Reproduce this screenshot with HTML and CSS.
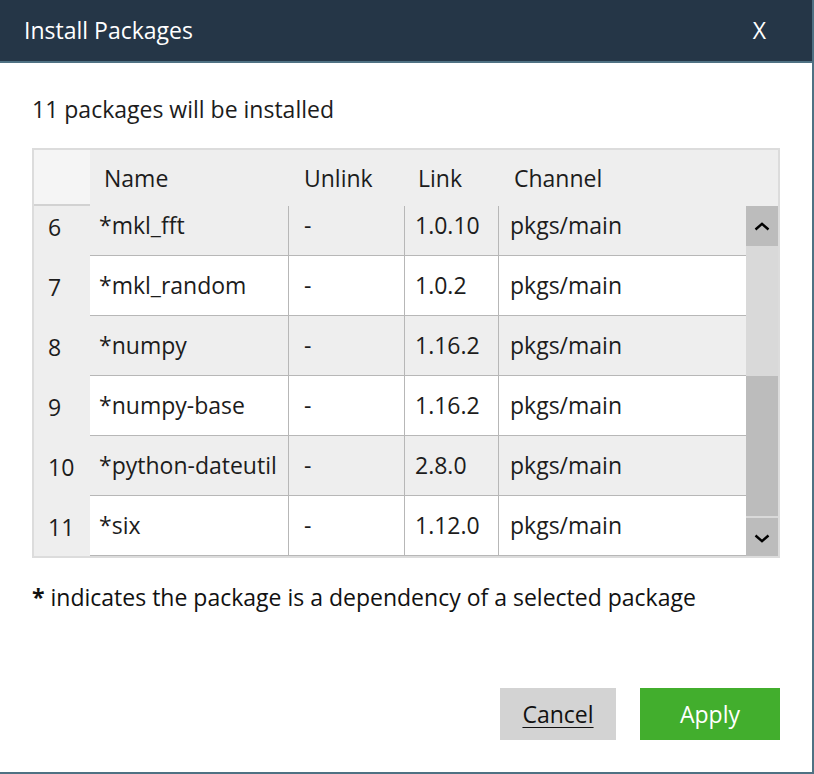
FILE: index.html
```html
<!DOCTYPE html>
<html lang="en">
<head>
<meta charset="utf-8">
<title>Install Packages</title>
<link rel="stylesheet" href="styles.css">
</head>
<body>
<div class="dialog">
  <div class="titlebar">
    <span class="title">Install Packages</span>
    <span class="close">X</span>
  </div>
  <div class="content">
    <p class="summary">11 packages will be installed</p>
    <div class="table">
      <div class="thead">
        <div class="corner"></div>
        <div class="th c-name">Name</div>
        <div class="th c-unlink">Unlink</div>
        <div class="th c-link">Link</div>
        <div class="th c-channel">Channel</div>
        <div class="th c-scroll"></div>
      </div>
      <div class="tbody">
        <div class="viewport">
          <div class="rows">
            <div class="row alt"><div class="num">6</div><div class="td c-name">*mkl_fft</div><div class="td c-unlink">-</div><div class="td c-link">1.0.10</div><div class="td c-channel">pkgs/main</div></div>
            <div class="row"><div class="num">7</div><div class="td c-name">*mkl_random</div><div class="td c-unlink">-</div><div class="td c-link">1.0.2</div><div class="td c-channel">pkgs/main</div></div>
            <div class="row alt"><div class="num">8</div><div class="td c-name">*numpy</div><div class="td c-unlink">-</div><div class="td c-link">1.16.2</div><div class="td c-channel">pkgs/main</div></div>
            <div class="row"><div class="num">9</div><div class="td c-name">*numpy-base</div><div class="td c-unlink">-</div><div class="td c-link">1.16.2</div><div class="td c-channel">pkgs/main</div></div>
            <div class="row alt"><div class="num">10</div><div class="td c-name">*python-dateutil</div><div class="td c-unlink">-</div><div class="td c-link">2.8.0</div><div class="td c-channel">pkgs/main</div></div>
            <div class="row"><div class="num">11</div><div class="td c-name">*six</div><div class="td c-unlink">-</div><div class="td c-link">1.12.0</div><div class="td c-channel">pkgs/main</div></div>
          </div>
        </div>
        <div class="scrollbar">
          <div class="sb-btn sb-up">
            <svg width="16" height="9" viewBox="0 0 16 9"><polyline points="1.5,7.5 8,1.8 14.5,7.5" fill="none" stroke="#000" stroke-width="2.4"/></svg>
          </div>
          <div class="sb-track"></div>
          <div class="sb-thumb"></div>
          <div class="sb-gap"></div>
          <div class="sb-btn sb-down">
            <svg width="16" height="9" viewBox="0 0 16 9"><polyline points="1.5,1.5 8,7.2 14.5,1.5" fill="none" stroke="#000" stroke-width="2.4"/></svg>
          </div>
        </div>
      </div>
    </div>
    <p class="note"><b>*</b> indicates the package is a dependency of a selected package</p>
    <div class="actions">
      <button class="btn btn-cancel">Cancel</button>
      <button class="btn btn-apply">Apply</button>
    </div>
  </div>
</div>
</body>
</html>
```
FILE: styles.css
```css
* { box-sizing: border-box; }
html, body { margin: 0; padding: 0; background: #fff; }
body {
  font-family: "Open Sans", "Noto Sans", sans-serif;
  font-size: 23px;
  color: #1c1c1c;
}
.dialog {
  width: 814px;
  height: 774px;
  border-right: 2px solid #4f7183;
  border-bottom: 2px solid #4f7183;
  display: flex;
  flex-direction: column;
  background: #fff;
}
.titlebar {
  height: 63px;
  background: #253647;
  border-bottom: 2px solid #4f7183;
  display: flex;
  align-items: center;
  justify-content: space-between;
  padding: 0 46px 2px 24px;
  color: #fff;
  flex: none;
}
.title { font-size: 23px; line-height: 30px; }
.close { font-size: 23px; line-height: 30px; }
.content {
  padding: 0 32px;
  display: flex;
  flex-direction: column;
}
.summary {
  margin: 0;
  height: 85px;
  padding-top: 31px;
  line-height: 30px;
}
.table {
  width: 748px;
  height: 410px;
  border: 2px solid #dcdcdc;
  display: flex;
  flex-direction: column;
}
.thead {
  height: 56px;
  display: grid;
  grid-template-columns: 56px 198px 116px 94px 248px 32px;
  background: #eeeeee;
  flex: none;
}
.corner {
  background: #f5f5f5;
  border-bottom: 2px solid #d2d2d2;
}
.th {
  display: flex;
  align-items: center;
  line-height: 30px;
  padding-top: 0;
}
.th.c-name { padding-left: 14px; }
.th.c-unlink { padding-left: 16px; }
.th.c-link { padding-left: 14px; }
.th.c-channel { padding-left: 16px; }
.tbody {
  height: 350px;
  display: flex;
}
.viewport {
  width: 712px;
  height: 350px;
  overflow: hidden;
  background: #eeeeee;
}
.rows { margin-top: -10px; }
.row {
  display: grid;
  grid-template-columns: 56px 198px 116px 94px 248px;
  height: 60px;
  background: #fff;
}
.row.alt { background: #eeeeee; }
.num {
  background: #eeeeee;
  display: flex;
  align-items: center;
  padding-left: 14px;
  padding-top: 2px;
  line-height: 30px;
}
.td {
  display: flex;
  align-items: center;
  border-bottom: 1px solid #b7b7b7;
  line-height: 30px;
  padding-bottom: 2px;
  white-space: nowrap;
}
.td.c-name { padding-left: 9px; }
.td.c-unlink { padding-left: 15px; border-left: 1px solid #b7b7b7; }
.td.c-link { padding-left: 10px; border-left: 1px solid #b7b7b7; }
.td.c-channel { padding-left: 11px; border-left: 1px solid #b7b7b7; }
.scrollbar {
  width: 32px;
  height: 350px;
  background: #d9d9d9;
  display: flex;
  flex-direction: column;
}
.sb-btn {
  background: #bcbcbc;
  display: flex;
  align-items: center;
  justify-content: center;
  flex: none;
}
.sb-up { height: 40px; }
.sb-track { height: 130px; flex: none; }
.sb-thumb { height: 140px; background: #bcbcbc; flex: none; }
.sb-gap { height: 2px; flex: none; }
.sb-down { height: 38px; padding-top: 2px; }
.sb-btn svg { display: block; }
.note {
  margin: 24px 0 0;
  line-height: 30px;
  color: #111;
}
.note b { font-weight: 700; }
.actions {
  margin-top: 76px;
  display: flex;
  justify-content: flex-end;
  gap: 24px;
}
.btn {
  font-family: inherit;
  font-size: 23px;
  height: 52px;
  border: none;
  padding: 0;
  line-height: 30px;
}
.btn-cancel {
  width: 116px;
  background: #d3d3d3;
  color: #111;
  text-decoration: underline;
  text-underline-offset: 4px;
  text-decoration-thickness: 1px;
}
.btn-apply {
  width: 140px;
  background: #42ae2d;
  color: #fff;
}
```
